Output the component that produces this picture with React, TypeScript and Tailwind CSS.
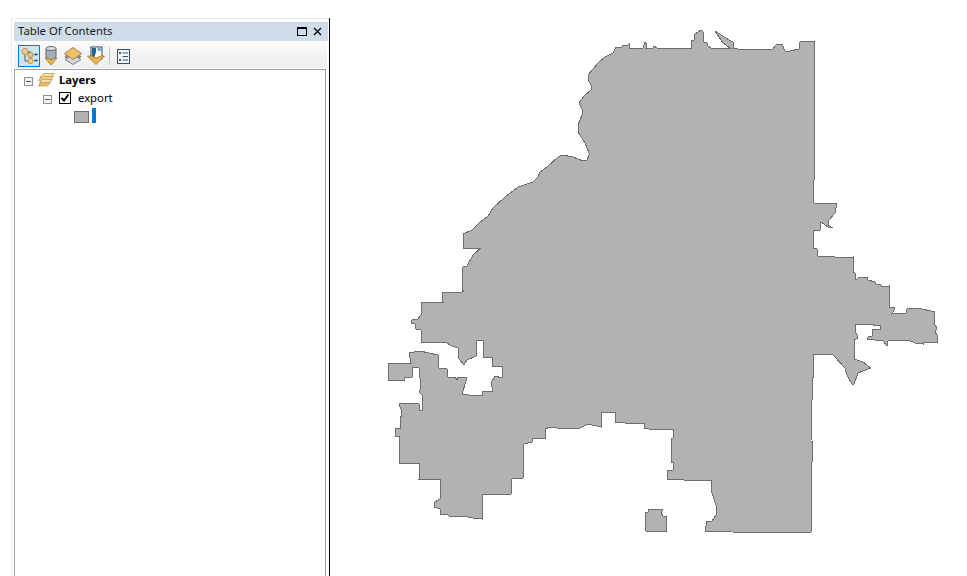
const MAIN =
  '589,153 585,143 578,132 578,125 582,115 582,109 579,103 585,95 591,90 591,85 588,80 588,75 598,63 605,57 613,53 616,47 622,47 623,45 627,46 629,44 629,48 643,48 645,42 647,45 646,48 653,48 654,46 657,48 691,48 691,41 694,40 695,34 701,30 703,32 704,42 707,43 708,46 711,48 730,48 723,43 715,31 729,40 733,42 733,48 738,49 773,49 776,45 782,44 785,51 790,51 799,49 800,42 808,41 814,41 814,126 814,167 814,180 813,192 814,203 837,203 835,213 829,220 828,225 833,228 828,227 821,222 820,230 814,230 813,248 817,249 818,256 835,257 847,258 853,257 853,272 855,273 856,280 859,277 867,277 868,280 875,282 876,284 881,285 881,287 889,286 889,307 895,308 892,314 906,313 907,309 918,308 935,312 934,323 937,328 935,332 937,335 937,342 923,342 923,344 915,343 908,340 888,341 887,346 883,341 875,340 867,339 868,337 872,336 873,329 880,329 880,325 873,325 873,324 855,324 855,330 858,338 854,340 854,359 863,362 871,368 858,373 854,384 852,384 847,375 845,368 835,357 832,354 813,355 813,377 812,377 812,400 811,441 813,442 812,462 811,463 811,532 805,533 795,532 785,532 774,533 732,532 705,531 707,521 712,521 716,515 716,505 711,490 711,480 684,480 667,479 667,471 673,470 673,462 671,462 671,439 673,438 673,429 649,429 644,428 645,423 625,423 615,422 615,412 601,412 601,427 588,424 580,428 563,428 557,428 550,427 545,429 545,438 532,438 532,442 524,444 523,478 512,479 511,494 482,494 482,519 473,518 463,516 459,517 449,516 448,515 440,514 440,509 434,507 435,502 440,499 440,479 419,479 420,464 399,463 399,457 400,437 395,436 395,428 400,428 400,421 402,412 399,404 408,403 419,404 419,410 422,410 422,395 419,392 421,388 419,368 413,367 412,377 404,377 404,380 388,380 388,363 411,363 409,353 420,351 438,355 439,368 447,369 448,377 455,377 457,380 458,377 467,378 462,394 469,395 482,395 482,392 493,391 491,383 495,376 502,378 503,367 492,366 492,357 483,357 483,340 477,340 476,356 467,360 464,365 459,359 458,348 452,346 445,342 421,342 421,330 416,329 415,324 411,323 412,320 418,319 421,315 421,302 443,302 442,292 462,292 463,290 463,292 462,272 463,267 467,266 473,255 481,248 463,248 463,234 472,230 479,223 488,216 493,208 505,197 518,187 533,182 538,177 540,172 547,167 558,157 562,155 573,157 583,161 587,160 589,155'

const ISLAND = '645,513 648,512 648,509 663,509 661,513 663,516 666,516 666,531 646,531 645,526'

function TreeToggle() {
  return (
    <div className="mt-[3px] flex h-[9px] w-[9px] items-center justify-center border border-[#8f8f9c] bg-[#f4f4f4]">
      <div className="h-px w-[5px] bg-[#4a5a78]" />
    </div>
  )
}

function Toolbar() {
  return (
    <div className="flex h-[24px] items-center rounded-t-[3px] bg-gradient-to-b from-[#f8f8f8] to-[#eeeeee] pl-[4px]">
      <div className="flex h-[22px] w-[22px] items-center justify-center border border-[#0078d7] bg-[#cde4f7]">
        <svg width="19" height="19" viewBox="0 0 19 19">
          <path d="M5 8 V14 H9 M7 5 H11" fill="none" stroke="#555" strokeWidth="1" />
          <circle cx="5" cy="4.5" r="3" fill="#f2cf8a" stroke="#b8924a" />
          <circle cx="10.5" cy="8" r="2.6" fill="#e3c88f" stroke="#a78a50" />
          <circle cx="10.5" cy="14" r="2.6" fill="#f2cf8a" stroke="#b8924a" />
          <path d="M14.5 7.5h3M14.5 13.5h3" stroke="#1e3a5f" strokeWidth="1.5" />
        </svg>
      </div>
      <svg className="ml-[1px]" width="20" height="22" viewBox="0 0 20 22">
        <path d="M5 3.500v9l5 3 5-3v-9z" fill="#a9adb3" stroke="#5e6672" />
        <ellipse cx="10" cy="3.500" rx="5" ry="2" fill="#dfe3e8" stroke="#5e6672" />
        <path d="M4 13h3l3 2 3-2h3l-6 7z" fill="#eab54f" stroke="#9c7430" strokeWidth="0.8" />
      </svg>
      <svg className="ml-[2px]" width="20" height="22" viewBox="0 0 20 22">
        <path d="M2 11.500 10 7l8 4.500-8 6z" fill="#8f939a" stroke="#6d7077" />
        <path d="M2 14.500 10 9.500l8 5-8 5z" fill="#d6d8db" stroke="#7d8087" />
        <path d="M1.500 8.500 10 2.500l8.500 6-8.500 6z" fill="#eec26d" stroke="#a88242" />
      </svg>
      <svg className="ml-[3px]" width="20" height="22" viewBox="0 0 20 22">
        <rect x="5" y="2" width="11" height="12" fill="#ffffff" stroke="#27496d" />
        <path d="M6 3h4v4l-2 6H6z" fill="#27618f" />
        <path d="M11 3h4v3h-3z" fill="#77aee0" />
        <path d="M1.500 11h4l4.500 2 4.500-2h4L10 19.500z" fill="#eab54f" stroke="#9c7430" strokeWidth="0.8" />
      </svg>
      <div className="ml-[3px] mr-[7px] h-[18px] w-px bg-[#c4c4c4]" />
      <svg width="13" height="15" viewBox="0 0 13 15">
        <rect x="0.500" y="0.500" width="12" height="14" fill="#f5f8fb" stroke="#34506e" />
        <path d="M5.500 4h5.500M5.500 7.500h5.500M5.500 11h5.500" stroke="#34506e" />
        <rect x="2" y="3" width="2" height="2" fill="#555" />
        <rect x="2" y="10" width="2" height="2" fill="#555" />
      </svg>
    </div>
  )
}

function TreePanel() {
  return (
    <div className="mt-px flex-1 border border-[#a0a0a0] bg-white pl-[9px] pt-px font-['Noto_Sans',sans-serif] text-[11.3px] leading-[18px] text-black">
      <div className="flex h-[18px] items-center">
        <TreeToggle />
        <svg className="ml-[5px]" width="17" height="14" viewBox="0 0 17 14">
          <path d="M5.500 0.500h11l-4 4h-11z" fill="#f7dca6" stroke="#c29a55" strokeWidth="0.8" />
          <path d="M4.500 3.500h11l-4 4h-11z" fill="#f3cd88" stroke="#c29a55" strokeWidth="0.8" />
          <path d="M3.500 6.500h11l-4 4h-9z" fill="#f7dca6" stroke="#c29a55" strokeWidth="0.8" />
          <path d="M2.500 9.500h10l-3 3.500h-9z" fill="#eeb964" stroke="#c29a55" strokeWidth="0.8" />
        </svg>
        <span className="ml-[4px] font-bold">Layers</span>
      </div>
      <div className="flex h-[18px] items-center pl-[19px]">
        <TreeToggle />
        <div className="ml-[7px] flex h-[12px] w-[12px] items-center justify-center border border-black bg-white">
          <svg width="10" height="10" viewBox="0 0 10 10">
            <path d="M1.500 5 4 7.500 8.500 1.500" fill="none" stroke="#000" strokeWidth="2" />
          </svg>
        </div>
        <span className="ml-[7px]">export</span>
      </div>
      <div className="flex h-[16px] items-center pl-[50px]">
        <div className="mt-[3px] h-[12px] w-[15px] border border-[#6e6e6e] bg-[#b2b2b2]" />
        <div className="ml-[3px] mt-px h-[15px] w-[4px] bg-[#0078d7]" />
      </div>
    </div>
  )
}

export default function App() {
  return (
    <div className="flex h-[576px] w-[967px] items-start overflow-hidden bg-white font-['Liberation_Sans',sans-serif]">
      <div className="mt-[18px] ml-[11px] flex h-[570px] w-[318px] flex-col border-t border-l border-[#ececec] pl-[2px] pr-[3px] pt-[3px]">
        <div className="-mr-[2px] flex h-[19px] shrink-0 items-center bg-[#cfdcea] pl-[4px] pr-[6px] font-['Noto_Sans',sans-serif] text-[11.3px] text-[#1a1a1a]">
          <span className="flex-1">Table Of Contents</span>
          <div className="h-[9px] w-[10px] border border-t-2 border-black" />
          <svg className="ml-[6px]" width="9" height="9" viewBox="0 0 9 9">
            <path d="M1 1 8 8M8 1 1 8" stroke="#000" strokeWidth="1.300" />
          </svg>
        </div>
        <div className="-mr-px mt-[3px] shrink-0">
          <Toolbar />
        </div>
        <TreePanel />
      </div>
      <div className="mt-[18px] h-[558px] w-px bg-black" />
      <svg className="block" width="637" height="576" viewBox="330 0 637 576" shapeRendering="crispEdges">
        <polygon points={MAIN} fill="#b2b2b2" stroke="#6e6e6e" strokeWidth="1" />
        <polygon points={ISLAND} fill="#b2b2b2" stroke="#6e6e6e" strokeWidth="1" />
      </svg>
    </div>
  )
}
